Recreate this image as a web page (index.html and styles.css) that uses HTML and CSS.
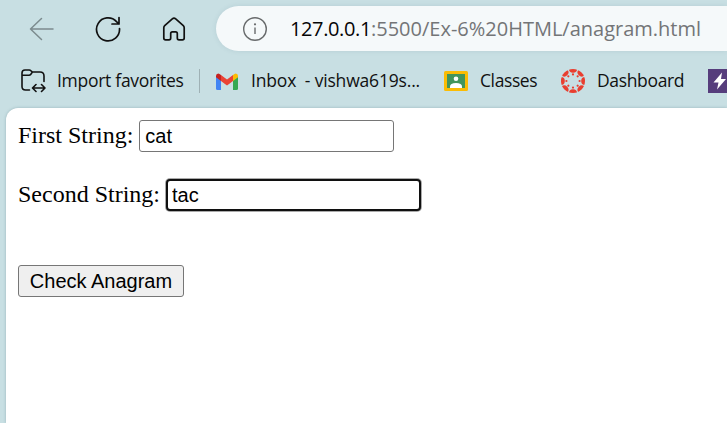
FILE: index.html
```html
<!DOCTYPE html>
<html lang="en">
<head>
<meta charset="utf-8">
<title>Anagram</title>
<link rel="stylesheet" href="styles.css">
</head>
<body>
<header class="toolbar">
  <svg class="nav-icon back" viewBox="0 0 26 26"><path d="M24 13H1.500M12.500 2.500 1.500 13l11 10.500"/></svg>
  <svg class="nav-icon reload" viewBox="0 0 26 26"><path d="M24.5 12.5A11.5 11.5 0 1 1 21.5 5.6L24 8M24 1.5V8h-7"/></svg>
  <svg class="nav-icon home" viewBox="0 0 26 26"><path d="M11.3 2.9 3.7 9.7Q2.8 10.5 2.8 11.8V22q0 1.8 1.8 1.8H8q1.7 0 1.7-1.8v-4.5q0-1.7 1.7-1.7h3.2q1.7 0 1.7 1.7V22q0 1.8 1.7 1.8h3.4q1.8 0 1.8-1.8V11.8q0-1.3-.9-2.1l-7.6-6.8Q13 1.4 11.3 2.9Z"/></svg>
  <div class="address">
    <svg class="info" viewBox="0 0 26 26"><circle cx="13" cy="13" r="11.3"/><path d="M13 11.5V18"/><circle class="info-dot" cx="13" cy="8.3" r="1.1"/></svg>
    <span class="url"><span class="host">127.0.0.1</span>:5500/Ex-6%20HTML/anagram.html</span>
  </div>
</header>
<nav class="favorites">
  <svg class="fav-icon folder" viewBox="0 0 26 26"><path d="M9.5 22H5.5Q2 22 2 18.5V5Q2 2 5 2h4.2q1 0 1.8.8L12.4 4H20q4 0 4 4v5.5M2 7.2h7q1 0 1.8-.8L12.4 4M13 20h12M16 16.5 12.5 20l3.5 3.5M21.5 16.5 25 20l-3.5 3.5"/></svg>
  <span class="label import">Import favorites</span>
  <span class="divider"></span>
  <svg class="gmail" viewBox="0 0 22 17"><path fill="#4285f4" d="M0 3.5 5 7v10H1.5Q0 17 0 15.5Z"/><path fill="#34a853" d="M22 3.5 17 7v10h3.5q1.5 0 1.5-1.5Z"/><path fill="#ea4335" d="m5 2 6 4.5L17 2v6l-6 4.5L5 8Z"/><path fill="#c5221f" d="M0 4V3Q0 .5 2.3.5 3.3.5 5 2v6L0 4.3Z"/><path fill="#fbbc04" d="M22 4V3Q22 .5 19.7.5 18.7.5 17 2v6l5-3.7Z"/></svg>
  <span class="label inbox">Inbox&nbsp; - vishwa619s...</span>
  <svg class="classroom" viewBox="0 0 24 20"><rect width="24" height="20" rx="1.5" fill="#fbbc04"/><rect x="3" y="3" width="18" height="14" fill="#43955b"/><circle cx="12" cy="7.8" r="2.3" fill="#fff"/><path d="M6 17v-1.5q0-3.5 6-3.5t6 3.5V17Z" fill="#fff"/></svg>
  <span class="label classes">Classes</span>
  <svg class="canvas-logo" viewBox="-12 -12 24 24">
    <defs><clipPath id="disc"><circle r="12"/></clipPath><g id="spoke"><circle cy="-12.3" r="4.1"/><circle cy="-6.6" r="1.1"/></g></defs>
    <g fill="#e93e2f" clip-path="url(#disc)"><use href="#spoke"/><use href="#spoke" transform="rotate(45)"/><use href="#spoke" transform="rotate(90)"/><use href="#spoke" transform="rotate(135)"/><use href="#spoke" transform="rotate(180)"/><use href="#spoke" transform="rotate(225)"/><use href="#spoke" transform="rotate(270)"/><use href="#spoke" transform="rotate(315)"/></g>
  </svg>
  <span class="label dashboard">Dashboard</span>
  <svg class="bolt" viewBox="0 0 24 24"><rect width="24" height="24" fill="#563d7c"/><path fill="#fff" d="M14 3.5 5.5 13.5h5L9 20.5 18 10h-5Z"/></svg>
</nav>
<main class="page">
  <div class="row"><label for="first">First String:</label><input id="first" class="field" type="text" value="cat"></div>
  <div class="row"><label for="second">Second String:</label><input id="second" class="field focused" type="text" value="tac"></div>
  <button class="check" type="button">Check Anagram</button>
</main>
</body>
</html>
```

FILE: styles.css
```css
* { box-sizing: border-box; }
body {
  margin: 0;
  width: 727px;
  height: 423px;
  overflow: hidden;
  background: #c8dfe3;
  font-family: "Open Sans", "Noto Sans", sans-serif;
  color: #111;
}
svg { flex: none; display: block; }
.toolbar {
  display: flex;
  align-items: center;
  height: 51px;
  padding: 6px 0 0 29px;
}
.nav-icon {
  width: 26px;
  height: 26px;
  fill: none;
  stroke: #111;
  stroke-width: 1.7;
  stroke-linecap: round;
  stroke-linejoin: round;
}
.back { stroke: #7c8b8e; stroke-width: 1.5; }
.reload { margin-left: 40px; }
.home { margin-left: 40px; }
.address {
  display: flex;
  align-items: center;
  flex: 1;
  min-width: 0;
  height: 45px;
  margin-left: 29px;
  padding-left: 26px;
  border-radius: 23px 0 0 23px;
  background: #f5f9fa;
  box-shadow: 0 0 5px rgba(70, 110, 120, .13);
}
.info { width: 26px; height: 26px; fill: none; stroke: #686b6c; stroke-width: 1.4; }
.info .info-dot { fill: #686b6c; stroke: none; }
.url {
  margin-left: 22px;
  font-size: 20px;
  white-space: nowrap;
  color: #737577;
}
.host { color: #050505; letter-spacing: -.38px; }
.favorites {
  display: flex;
  align-items: center;
  height: 57px;
  padding: 3px 0 0 20px;
}
.fav-icon {
  width: 26px;
  height: 26px;
  fill: none;
  stroke: #111;
  stroke-width: 1.6;
  stroke-linecap: round;
  stroke-linejoin: round;
}
.label { position: relative; top: -1px; flex: none; font-size: 17.5px; white-space: nowrap; }
.import { width: 128px; margin-left: 11px; letter-spacing: -.28px; }
.divider { flex: none; width: 1px; height: 24px; margin-left: 14px; background: #9fb1b5; }
.gmail { width: 22px; height: 17px; margin-left: 16px; }
.inbox { width: 171px; margin-left: 13px; letter-spacing: -.18px; }
.classroom { width: 24px; height: 20px; margin-left: 22px; }
.classes { width: 58px; margin-left: 12px; letter-spacing: -.4px; }
.canvas-logo { width: 24px; height: 24px; margin-left: 23px; }
.dashboard { width: 89px; margin-left: 12px; letter-spacing: -.35px; }
.bolt { width: 24px; height: 24px; margin-left: 22px; }
.page {
  height: 315px;
  margin-left: 6px;
  padding: 12px;
  border-radius: 12px 0 0;
  background: #fff;
  box-shadow: 0 0 3px rgba(60, 100, 110, .35);
  font: 24px "Liberation Serif", serif;
  color: #000;
}
.row { display: flex; align-items: center; gap: 6px; height: 32px; margin-bottom: 27px; }
.row label { position: relative; top: -1px; white-space: nowrap; }
.field {
  width: 255px;
  height: 32px;
  padding: 1px 5px;
  border: 1px solid #767676;
  border-radius: 3px;
  outline: none;
  background: #fff;
  font: 20px "Liberation Sans", sans-serif;
  color: #000;
}
.focused { border: 2px solid #101010; border-radius: 4px; padding: 0 4px; box-shadow: 0 0 0 1px #aaa; }
.check {
  display: block;
  width: 166px;
  height: 32px;
  margin-top: 54px;
  padding: 0;
  border: 1px solid #767676;
  border-radius: 3px;
  background: #efefef;
  font: 20px "Liberation Sans", sans-serif;
  color: #000;
  white-space: nowrap;
}
```
